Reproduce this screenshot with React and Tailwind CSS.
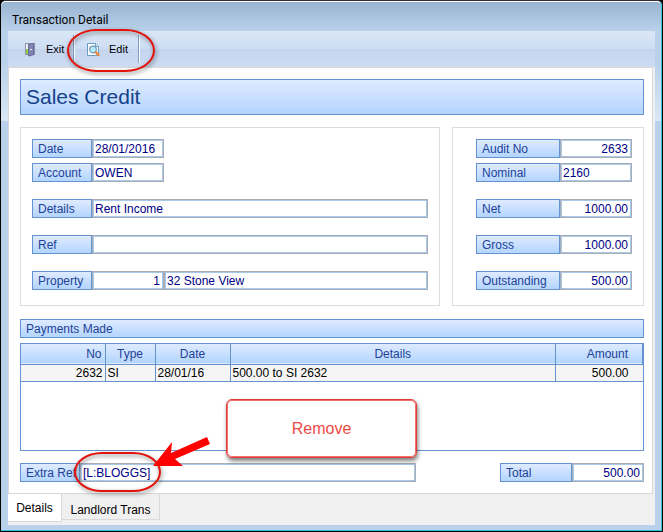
import React from "react";

const labelStyle =
  "flex h-[19px] shrink-0 items-center border border-[#6593cf] bg-linear-to-b from-[#dfebff] to-[#b3d5ff] pl-[5px] whitespace-nowrap text-[#1e4296]";
const boxStyle =
  "h-[19px] min-w-0 border border-[#a9adb3] pl-[2px] pr-[3px] text-[#000084] outline-none bg-white shadow-[inset_0_0_0_1px_#a9c9ea]";

function Label({ htmlFor, className, children }) {
  return (
    <label htmlFor={htmlFor} className={`${labelStyle} ${className}`}>
      {children}
    </label>
  );
}

function Box({ id, value, className, label }) {
  return (
    <input id={id} aria-label={label} defaultValue={value} className={`${boxStyle} ${className}`} />
  );
}

function LeftRow({ id, name, value, wide }) {
  return (
    <div className="flex">
      <Label htmlFor={id} className="w-[60px]">{name}</Label>
      <Box id={id} value={value} className={wide ? "flex-1" : "w-[72px]"} />
    </div>
  );
}

function RightRow({ id, name, value, left }) {
  return (
    <div className="flex">
      <Label htmlFor={id} className="w-[84px]">{name}</Label>
      <Box id={id} value={value} className={left ? "w-[72px]" : "w-[72px] text-right"} />
    </div>
  );
}

function DoorIcon() {
  return (
    <svg className="shrink-0" width="16" height="16" viewBox="0 0 16 16" aria-hidden="true">
      <path d="M3 2h10v12H3z" fill="#8c91ab" />
      <path d="M4 3h3v10H4z" fill="#eef3f8" />
      <path d="M4 8h3v5H4z" fill="#93d044" />
      <path d="M6 3l6-1v12l-5 1.500-1-1z" fill="#696d9c" />
      <path d="M7 4l4-1v10l-4 1z" fill="#8185b3" />
      <path d="M8 8h2v1H8z" fill="#e9e9f2" />
    </svg>
  );
}

function PreviewIcon() {
  return (
    <svg className="shrink-0" width="16" height="16" viewBox="0 0 16 16" aria-hidden="true">
      <path d="M2.500 2.500h8l3 3v9h-11z" fill="#fff" stroke="#6a9cc4" />
      <path d="M10.500 2.500v3h3" fill="#dcebf7" stroke="#6a9cc4" />
      <circle cx="8" cy="8.500" r="3.300" fill="#b4ecfb" stroke="#7295b4" strokeWidth="1.200" />
      <path d="M11.200 11.700l2.300 2.300" stroke="#e88a3c" strokeWidth="2.500" strokeLinecap="round" />
    </svg>
  );
}

export default function App() {
  return (
    <div className="relative flex min-h-screen flex-col bg-black px-px pb-px font-['Liberation_Sans',Arial,sans-serif] text-[12px] leading-[14px]">
      <div className="flex flex-1 flex-col rounded-t-[5px] border-t border-t-[#32323c] bg-[#b9d1ea]">
        <div className="flex flex-1 flex-col rounded-t-[5px] border-t border-r border-b border-t-white border-r-[#30c8e0] border-b-[#30c8e0] bg-[linear-gradient(#99b4d1_0px,#b9d1ea_29px,#b9d1ea_60px,#dbe7f5_119px,#b9d1ea_119px)]">
          <header className="flex h-[29px] items-center pt-[6px] pl-[11px]">
            <h1 className="font-[Roboto,sans-serif] text-[12px] text-black">Transaction Detail</h1>
          </header>
          <div className="mr-[6px] mb-[5px] ml-[7px] flex flex-1 flex-col bg-[#f0f0f0]">
            <nav className="flex h-[36px] items-center bg-[linear-gradient(#dae7f5_0%,#cdddf4_50%,#c5d5ee_50%,#cddcf3_100%)] text-[11px]">
              <button className="flex h-[28px] w-[66px] items-center gap-[8px] border-r border-[#7f9dcc] pl-[14px] shadow-[1px_0_0_#fff]">
                <DoorIcon />
                Exit
              </button>
              <button className="flex h-[28px] w-[65px] items-center gap-[8px] border-r border-[#7f9dcc] pl-[11px] shadow-[1px_0_0_#fff]">
                <PreviewIcon />
                Edit
              </button>
            </nav>
            <main className="mr-[2px] flex flex-1 flex-col border border-[#d9d9d9] bg-white pt-[11px] pr-[8px] pb-[11px] pl-[11px]">
              <h2 className="flex h-[36px] items-center border border-[#6593cf] bg-linear-to-b from-[#dfebff] to-[#b3d5ff] pl-[5px] text-[21px] text-[#15428b]">
                Sales Credit
              </h2>
              <div className="mt-[12px] flex gap-[12px]">
                <section className="flex-1 border border-[#dcdcdc] px-[11px] pt-[11px] pb-[15px]">
                  <LeftRow id="date" name="Date" value="28/01/2016" />
                  <div className="mt-[5px] flex flex-col gap-[17px]">
                    <LeftRow id="account" name="Account" value="OWEN" />
                    <LeftRow id="details" name="Details" value="Rent Income" wide />
                    <LeftRow id="ref" name="Ref" value="" wide />
                    <div className="flex">
                      <Label htmlFor="property" className="w-[60px]">Property</Label>
                      <Box id="property" value="1" className="w-[72px] text-right" />
                      <Box label="Property name" value="32 Stone View" className="flex-1" />
                    </div>
                  </div>
                </section>
                <section className="border border-[#dcdcdc] pt-[11px] pr-[11px] pb-[15px] pl-[23px]">
                  <RightRow id="audit" name="Audit No" value="2633" />
                  <div className="mt-[5px] flex flex-col gap-[17px]">
                    <RightRow id="nominal" name="Nominal" value="2160" left />
                    <RightRow id="net" name="Net" value="1000.00" />
                    <RightRow id="gross" name="Gross" value="1000.00" />
                    <RightRow id="outstanding" name="Outstanding" value="500.00" />
                  </div>
                </section>
              </div>
              <h3 className={`mt-[13px] ${labelStyle}`}>Payments Made</h3>
              <div className="mt-[5px] flex-1 border border-[#6593cf]">
                <table className="w-full table-fixed border-collapse">
                  <colgroup>
                    <col className="w-[84px]" />
                    <col className="w-[50px]" />
                    <col className="w-[75px]" />
                    <col />
                    <col className="w-[87px]" />
                  </colgroup>
                  <thead>
                    <tr className="h-[20px] border-b border-[#6593cf] bg-linear-to-b from-[#dfebff] to-[#b3d5ff] text-[#1e4296] [&>th]:border-r [&>th]:border-[#6593cf] [&>th]:p-0 [&>th]:font-normal">
                      <th><div className="pr-[3px] text-right">No</div></th>
                      <th>Type</th>
                      <th>Date</th>
                      <th>Details</th>
                      <th><div className="pr-[14px] text-right">Amount</div></th>
                    </tr>
                  </thead>
                  <tbody>
                    <tr className="h-[17px] border-b border-[#6593cf] bg-[#f5f5f5] text-black [&>td]:border-r [&>td]:border-[#6593cf] [&>td]:px-[2px] [&>td]:py-0 [&>td:last-child]:border-r-0">
                      <td className="text-right">2632</td>
                      <td>SI</td>
                      <td>28/01/16</td>
                      <td>500.00 to SI 2632</td>
                      <td><div className="pr-[12px] text-right">500.00</div></td>
                    </tr>
                  </tbody>
                </table>
              </div>
              <div className="mt-[12px] flex">
                <Label htmlFor="extra" className="w-[60px]">Extra Ref</Label>
                <Box id="extra" value="[L:BLOGGS]" className="mr-[84px] flex-1" />
                <Label htmlFor="total" className="w-[72px]">Total</Label>
                <Box id="total" value="500.00" className="w-[72px] text-right" />
              </div>
            </main>
            <footer className="flex h-[31px] items-start text-black">
              <button className="h-[28px] w-[54px] border-r border-b border-[#d9d9d9] bg-white">Details</button>
              <button className="h-[26px] w-[98px] border-r border-b border-[#d9d9d9] pt-[6px]">Landlord Trans</button>
            </footer>
          </div>
        </div>
      </div>
      <div className="pointer-events-none absolute top-[29px] left-[67px] h-[43px] w-[88px] rounded-[30px/22px] border-2 border-[#e3120b] drop-shadow-[1px_2px_2px_rgba(0,0,0,0.5)]" />
      <div className="pointer-events-none absolute top-[452px] left-[74px] h-[40px] w-[87px] rounded-[28px/20px] border-2 border-[#e3120b] drop-shadow-[1px_2px_2px_rgba(0,0,0,0.5)]" />
      <svg className="pointer-events-none absolute top-[430px] left-[145px]" width="75" height="50" viewBox="0 0 75 50" aria-hidden="true">
        <path d="M8 36L27 12L26 23L62 7L65 14L30 29L38 36z" fill="#f00" />
      </svg>
      <div className="absolute top-[399px] left-[226px] flex h-[59px] w-[191px] items-center justify-center rounded-[6px] border border-[#e23c37] bg-white text-[16px] text-[#ee4a45] shadow-[1px_3px_4px_rgba(0,0,0,0.5),inset_0_0_0_1px_#f0706c]">
        Remove
      </div>
    </div>
  );
}
